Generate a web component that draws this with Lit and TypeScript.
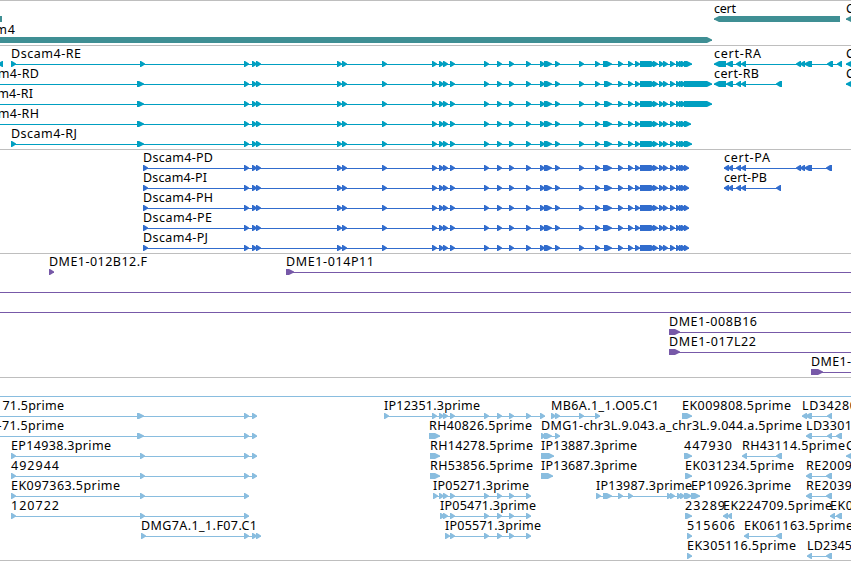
import { LitElement, html, svg, css } from 'lit';
import { customElement, property } from 'lit/decorators.js';

type Span = [number, number];

interface Feature {
  name?: string;
  labelEnd?: number; // right edge of the label
  labelStart?: number; // only when it differs from the feature start
  start: number;
  end: number;
  reverse?: boolean;
  blocks: Span[];
}

interface Track {
  kind: string;
  rows: Feature[][];
}

const TIP = 5;

const fwd = (name: string, labelEnd: number, blocks: Span[], extra: Partial<Feature> = {}): Feature => ({
  name,
  labelEnd,
  blocks,
  start: blocks[0][0],
  end: blocks[blocks.length - 1][1],
  ...extra,
});

const rev = (name: string, labelEnd: number, blocks: Span[], extra: Partial<Feature> = {}): Feature =>
  fwd(name, labelEnd, blocks, { reverse: true, ...extra });

// Short blocks are drawn as a single arrow head
const tips = (...xs: number[]): Span[] => xs.map((x): Span => [x, x + TIP]);

const line = (start: number, end: number): Feature => ({ start, end, blocks: [] });

// Exons shared by every Dscam4 isoform
const dscam = (altStart: number, tail: Span): Span[] => [
  ...tips(244, 252, 256, 337, 342, 382, 432, 439, 443, 450, 484, 497, 509, 526, 540),
  [544, 552],
  ...tips(555, 579, 595),
  [altStart, 612],
  ...tips(618, 628, 635),
  [640, 656],
  ...tips(653, 659, 663, 670, 676, 679, 681),
  tail,
];

const TRACKS: Track[] = [
  {
    kind: 'gene',
    rows: [
      [
        { start: -20, end: 2, reverse: true, blocks: [[-20, 2]] },
        rev('cert', 735, [[714, 840]]),
        rev('C', 854, [[846, 870]]),
      ],
      [fwd('Dscam4', 14, [[-36, 712]])],
    ],
  },
  {
    kind: 'transcript',
    rows: [
      [
        { start: -20, end: 3, reverse: true, blocks: [[-2, 3]] },
        fwd('Dscam4-RE', 80, [[11, 16], [140, 145], ...dscam(603, [684, 692])]),
        rev('cert-RA', 760, [[714, 726], [726, 733], ...tips(736, 741, 796, 800), [804, 812], [827, 833], [837, 842]]),
        rev('C', 854, [[846, 870]]),
      ],
      [
        fwd('Dscam4-RD', 38, [[137, 144], ...dscam(604, [684, 712])], { start: -32 }),
        rev('cert-RB', 758, [[714, 726], [726, 733], ...tips(736, 741), [776, 782]]),
        rev('C', 854, [[846, 870]]),
      ],
      [fwd('Dscam4-RI', 32, [[137, 144], ...dscam(604, [684, 712])], { start: -32 })],
      [fwd('Dscam4-RH', 38, [[137, 144], ...dscam(603, [684, 691])], { start: -32 })],
      [fwd('Dscam4-RJ', 76, [[11, 16], [137, 144], ...dscam(604, [684, 692])])],
    ],
  },
  {
    kind: 'protein',
    rows: [
      [
        fwd('Dscam4-PD', 212, [[143, 148], ...dscam(603, [684, 689])]),
        rev('cert-PA', 769, [...tips(724, 728, 736, 741, 796, 800), [804, 812], [826, 832]]),
      ],
      [
        fwd('Dscam4-PI', 206, [[143, 148], ...dscam(604, [684, 689])]),
        rev('cert-PB', 766, tips(724, 728, 736, 741, 776)),
      ],
      [fwd('Dscam4-PH', 212, [[143, 148], ...dscam(603, [684, 689])])],
      [fwd('Dscam4-PE', 211, [[143, 148], ...dscam(603, [684, 689])])],
      [fwd('Dscam4-PJ', 207, [[143, 148], ...dscam(604, [684, 689])])],
    ],
  },
  {
    kind: 'bac',
    rows: [
      [fwd('DME1-012B12.F', 146, tips(49)), fwd('DME1-014P11', 373, [[286, 294]], { end: 851 })],
      [line(0, 851)],
      [line(0, 851)],
      [fwd('DME1-008B16', 756, [[669, 680]], { end: 851 })],
      [fwd('DME1-017L22', 755, [[669, 680]], { end: 851 })],
      [fwd('DME1-', 850, [[811, 823]], { end: 851 })],
    ],
  },
  {
    kind: 'est',
    rows: [
      [line(0, 851)],
      [
        fwd('71.5prime', 63, [[137, 144], ...tips(244, 252)], { start: 0, labelStart: 2.4 }),
        fwd('IP12351.3prime', 479, tips(384, 432, 439, 443, 450, 484, 497, 509, 526, 540)),
        fwd('MB6A.1_1.O05.C1', 658, tips(551, 555, 579, 595)),
        fwd('EK009808.5prime', 790, [[682, 692]]),
        rev('LD34280', 856, [...tips(802), [805, 812], [827, 832]]),
      ],
      [
        fwd('-71.5prime', 63, [[137, 144], ...tips(244, 252)], { start: 0, labelStart: -2.4 }),
        fwd('RH40826.5prime', 531, [[429, 440]]),
        fwd('DMG1-chr3L.9.043.a_chr3L.9.044.a.5prime', 801, [[541, 546], [544, 552], [555, 560]]),
        rev('LD3301', 851, [[806, 812], [827, 832], [836, 842]]),
      ],
      [
        fwd('EP14938.3prime', 110, tips(11, 140, 244, 252)),
        fwd('RH14278.5prime', 532, [[430, 440]]),
        fwd('IP13887.3prime', 636, [[541, 554]]),
        fwd('447930', 731, [[684, 692]]),
        rev('RH43114.5prime', 844, [[742, 747], [776, 782]]),
        rev('C', 854, [[846, 870]]),
      ],
      [
        fwd('492944', 58, tips(11, 140, 244, 252)),
        fwd('RH53856.5prime', 532, [[430, 440]]),
        fwd('IP13687.3prime', 636, [[541, 553]]),
        fwd('EK031234.5prime', 793, [[685, 692]]),
        rev('RE2009', 851, [[806, 812], [826, 832]]),
      ],
      [
        fwd('EK097363.5prime', 119, tips(11, 140, 244)),
        fwd('IP05271.3prime', 528, tips(433, 439, 443, 450, 484, 497, 509, 526)),
        fwd('IP13987.3prime', 691, [[596, 601], [603, 612], ...tips(618, 628, 667, 670, 677, 680), [684, 692]]),
        fwd('EP10926.3prime', 790, [[691, 700]]),
        rev('RE2039', 851, [[806, 812], [826, 832]]),
      ],
      [
        fwd('120722', 58, tips(11, 140, 244)),
        fwd('IP05471.3prime', 535, tips(440, 443, 450, 484, 497, 509, 526)),
        fwd('23289', 724, [[685, 692]]),
        rev('EK224709.5prime', 831, tips(723, 727)),
        rev('EK0', 852, [[830, 835], [836, 842]]),
      ],
      [
        fwd('DMG7A.1_1.F07.C1', 256, tips(141, 244, 252, 256)),
        fwd('IP05571.3prime', 540, tips(445, 450, 484, 497, 509, 526)),
        fwd('515606', 734, [[687, 692]]),
        rev('EK061163.5prime', 852, [[744, 749], [776, 782]]),
      ],
      [
        fwd('EK305116.5prime', 795, [[687, 692]]),
        rev('LD2345', 851, [[807, 812], [826, 832]]),
      ],
    ],
  },
];

@customElement('track-row')
export class TrackRow extends LitElement {
  @property({ attribute: false }) features: Feature[] = [];

  static styles = css`
    :host {
      display: block;
      height: 20px;
    }
    svg {
      display: block;
      width: 100%;
      height: 20px;
      overflow: visible;
    }
    .label {
      fill: #000;
      font-family: 'Noto Sans', 'DejaVu Sans', sans-serif;
      font-size: 12.5px;
      font-weight: 400;
    }
    .shape {
      fill: currentColor;
    }
  `;

  render() {
    return html`<svg>${this.features.map((f) => this.renderFeature(f))}</svg>`;
  }

  private renderFeature(f: Feature) {
    return svg`
      <rect class="shape" x=${f.start} y="17" width=${f.end - f.start} height="1"></rect>
      ${f.blocks.map(([a, b]) => svg`<polygon class="shape" points=${this.points(a, b, f.reverse)}></polygon>`)}
      ${f.name ? this.renderLabel(f) : ''}
    `;
  }

  private renderLabel(f: Feature) {
    const x = f.labelStart ?? f.start;
    return svg`<text class="label" x=${x} y="11" textLength=${f.labelEnd! - x + 1}>${f.name}</text>`;
  }

  // Outline of one block, with a slightly blunt tip on the strand side
  private points(a: number, b: number, reverse = false) {
    const neck = b - a > TIP + 1 ? TIP : TIP - 1;
    return reverse
      ? `${b},14 ${a + neck},14 ${a},16.4 ${a},17.6 ${a + neck},20 ${b},20`
      : `${a},14 ${b - neck},14 ${b},16.4 ${b},17.6 ${b - neck},20 ${a},20`;
  }
}

@customElement('app-root')
export class AppRoot extends LitElement {
  static styles = css`
    :host {
      display: block;
      width: 851px;
      height: 561px;
      overflow: hidden;
      background: #fff;
    }
    .browser {
      display: flex;
      flex-direction: column;
      border-bottom: 1px solid #bebebe;
    }
    .track {
      display: flex;
      flex-direction: column;
      border-top: 1px solid #bebebe;
      padding: 1px 0 2px;
    }
    .gene {
      gap: 1px;
      color: #3f8f94;
    }
    .transcript {
      color: #009fc1;
    }
    .protein {
      color: #316ccd;
    }
    .bac {
      color: #7759a8;
    }
    .est {
      color: #89bddf;
      padding-bottom: 1px;
    }
  `;

  render() {
    return html`
      <div class="browser">
        ${TRACKS.map(
          (track) => html`
            <div class="track ${track.kind}">
              ${track.rows.map((row) => html`<track-row .features=${row}></track-row>`)}
            </div>
          `,
        )}
      </div>
    `;
  }
}
